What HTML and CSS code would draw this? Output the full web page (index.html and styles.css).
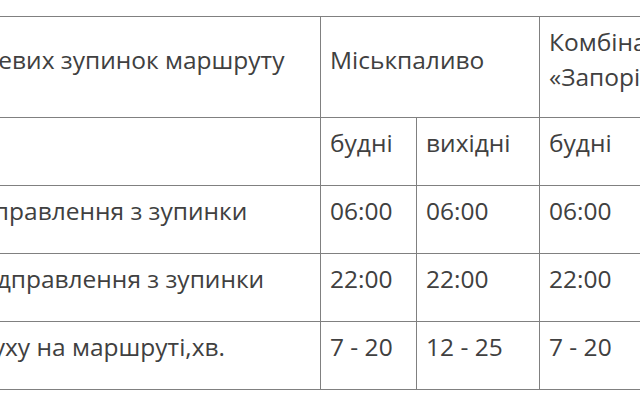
FILE: index.html
```html
<!DOCTYPE html>
<html lang="uk">
<head>
<meta charset="utf-8">
<title>Розклад маршруту</title>
<link rel="stylesheet" href="styles.css">
</head>
<body>
<div class="viewport">
  <table class="schedule">
    <colgroup>
      <col class="c-name">
      <col class="c-narrow">
      <col class="c-wide">
      <col class="c-wide">
      <col class="c-wide">
    </colgroup>
    <tbody>
      <tr class="head">
        <td>Назва кінцевих зупинок маршруту</td>
        <td colspan="2">Міськпаливо</td>
        <td colspan="2">Комбінат «Запоріжсталь»</td>
      </tr>
      <tr>
        <td></td>
        <td>будні</td>
        <td>вихідні</td>
        <td>будні</td>
        <td>вихідні</td>
      </tr>
      <tr>
        <td>Перше відправлення з зупинки</td>
        <td>06:00</td>
        <td>06:00</td>
        <td>06:00</td>
        <td>06:00</td>
      </tr>
      <tr>
        <td>Останнє відправлення з зупинки</td>
        <td>22:00</td>
        <td>22:00</td>
        <td>22:00</td>
        <td>22:00</td>
      </tr>
      <tr>
        <td>Інтервал&#8202;руху на маршруті,хв.</td>
        <td>7 - 20</td>
        <td>12 - 25</td>
        <td>7 - 20</td>
        <td>12 - 25</td>
      </tr>
    </tbody>
  </table>
</div>
</body>
</html>
```
FILE: styles.css
```css
html, body {
  margin: 0;
  padding: 0;
  background: #ffffff;
}

.viewport {
  width: 640px;
  height: 400px;
  overflow: hidden;
  padding-top: 16px;
  box-sizing: border-box;
}

.schedule {
  border-collapse: collapse;
  table-layout: fixed;
  width: 924px;
  margin-left: -139px;
  font-family: "Open Sans", "DejaVu Sans", sans-serif;
  font-size: 24.5px;
  line-height: 35px;
  color: #404040;
}

.c-name { width: 459px; }
.c-narrow { width: 96px; }
.c-wide { width: 123px; }

.schedule td {
  border: 1px solid #808080;
  padding: 7px 9px 25px;
  vertical-align: middle;
  text-align: left;
}

.schedule td:first-child {
  white-space: nowrap;
}

.schedule .head td {
  padding-bottom: 23px;
}
```
